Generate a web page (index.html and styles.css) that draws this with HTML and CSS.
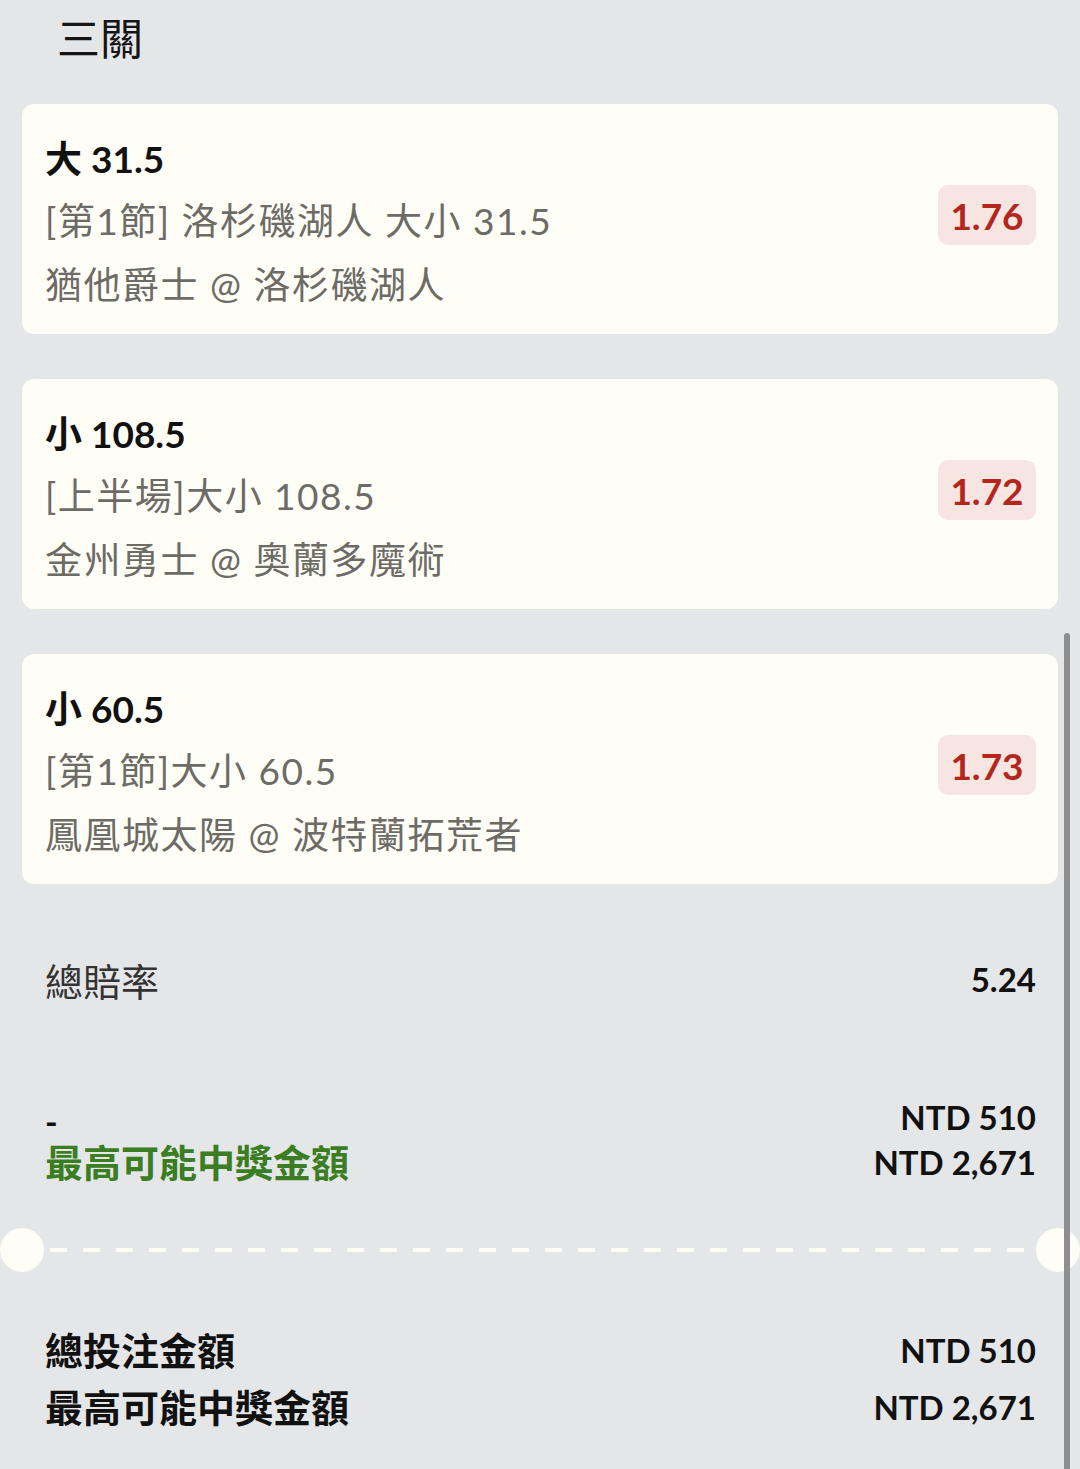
FILE: index.html
```html
<!DOCTYPE html>
<html lang="zh-Hant">
<head>
<meta charset="utf-8">
<link rel="stylesheet" href="styles.css">
</head>
<body>
<div class="page">
  <h1 class="title">三關</h1>
  <div class="cards">
    <div class="card">
      <div class="info">
        <div class="pick">大 31.5</div>
        <div class="sub">[第1節] 洛杉磯湖人 大小 31.5</div>
        <div class="sub">猶他爵士 @ 洛杉磯湖人</div>
      </div>
      <div class="odds">1.76</div>
    </div>
    <div class="card">
      <div class="info">
        <div class="pick">小 108.5</div>
        <div class="sub">[上半場]大小 108.5</div>
        <div class="sub">金州勇士 @ 奧蘭多魔術</div>
      </div>
      <div class="odds">1.72</div>
    </div>
    <div class="card">
      <div class="info">
        <div class="pick">小 60.5</div>
        <div class="sub">[第1節]大小 60.5</div>
        <div class="sub">鳳凰城太陽 @ 波特蘭拓荒者</div>
      </div>
      <div class="odds">1.73</div>
    </div>
  </div>

  <div class="row total-odds">
    <span class="label">總賠率</span>
    <span class="value">5.24</span>
  </div>

  <div class="row stake">
    <div class="left">
      <div class="dash">-</div>
      <div class="green">最高可能中獎金額</div>
    </div>
    <div class="right">
      <div>NTD 510</div>
      <div>NTD 2,671</div>
    </div>
  </div>

  <div class="divider">
    <span class="dot"></span>
    <span class="line"></span>
    <span class="dot"></span>
  </div>

  <div class="summary">
    <div class="row sum-row"><span>總投注金額</span><span class="num">NTD 510</span></div>
    <div class="row sum-row"><span>最高可能中獎金額</span><span class="num">NTD 2,671</span></div>
  </div>
  <div class="scrollbar"></div>
</div>
</body>
</html>
```

FILE: styles.css
```css
html, body {
  margin: 0;
  padding: 0;
  background: #e5e6e8;
}
body {
  font-family: Lato, "Noto Sans CJK TC", sans-serif;
  color: #111;
  width: 1080px;
  height: 1469px;
  overflow: hidden;
}
.page {
  position: relative;
  padding: 0 22px;
  height: 1469px;
  box-sizing: border-box;
}
.title {
  margin: 0;
  padding: 11px 0 0 35px;
  height: 104px;
  box-sizing: border-box;
  font-size: 43px;
  font-weight: 400;
  line-height: 56px;
  color: #151515;
}
.cards {
  display: flex;
  flex-direction: column;
  gap: 45px;
}
.card {
  background: #fefdf6;
  border-radius: 12px;
  height: 230px;
  box-sizing: border-box;
  padding: 25px 22px 0 23px;
  display: flex;
  justify-content: space-between;
  align-items: flex-start;
}
.pick {
  font-size: 37px;
  font-weight: 700;
  line-height: 60px;
  color: #111;
}
.sub {
  font-size: 37px;
  letter-spacing: 1.5px;
  line-height: 64px;
  color: #6c6b66;
}
.odds {
  margin-top: 56px;
  width: 98px;
  height: 60px;
  border-radius: 10px;
  background: #f6e5e0;
  color: #b3261e;
  font-size: 37px;
  font-weight: 700;
  display: flex;
  align-items: center;
  justify-content: center;
}
.row {
  display: flex;
  justify-content: space-between;
  padding: 0 22px 0 23px;
}
.total-odds {
  margin-top: 69px;
  align-items: center;
  height: 52px;
}
.total-odds .label {
  font-size: 38px;
  color: #333;
}
.total-odds .value {
  font-size: 33px;
  font-weight: 700;
}
.stake {
  margin-top: 90px;
  align-items: flex-end;
}
.stake .dash {
  font-size: 34px;
  font-weight: 700;
  line-height: 36px;
}
.stake .green {
  font-size: 38px;
  font-weight: 700;
  color: #3b7d23;
  line-height: 45px;
}
.stake .right {
  text-align: right;
  font-size: 33px;
  font-weight: 700;
  line-height: 45px;
}
.divider {
  margin: 43px -22px 0;
  height: 44px;
  display: flex;
  align-items: center;
}
.dot {
  width: 44px;
  height: 44px;
  border-radius: 50%;
  background: #fefdf6;
  flex: none;
}
.line {
  flex: 1;
  height: 4px;
  margin: 0 6px;
  background: repeating-linear-gradient(90deg, #fefdf6 0 17px, transparent 17px 33px);
}
.summary {
  margin-top: 50px;
  display: flex;
  flex-direction: column;
}
.sum-row {
  font-size: 38px;
  font-weight: 700;
  line-height: 57px;
  align-items: center;
}
.sum-row .num {
  font-size: 33px;
}
.scrollbar {
  position: absolute;
  right: 10px;
  top: 633px;
  width: 6px;
  height: 860px;
  border-radius: 3px;
  background: #8e8e8e;
}
```
